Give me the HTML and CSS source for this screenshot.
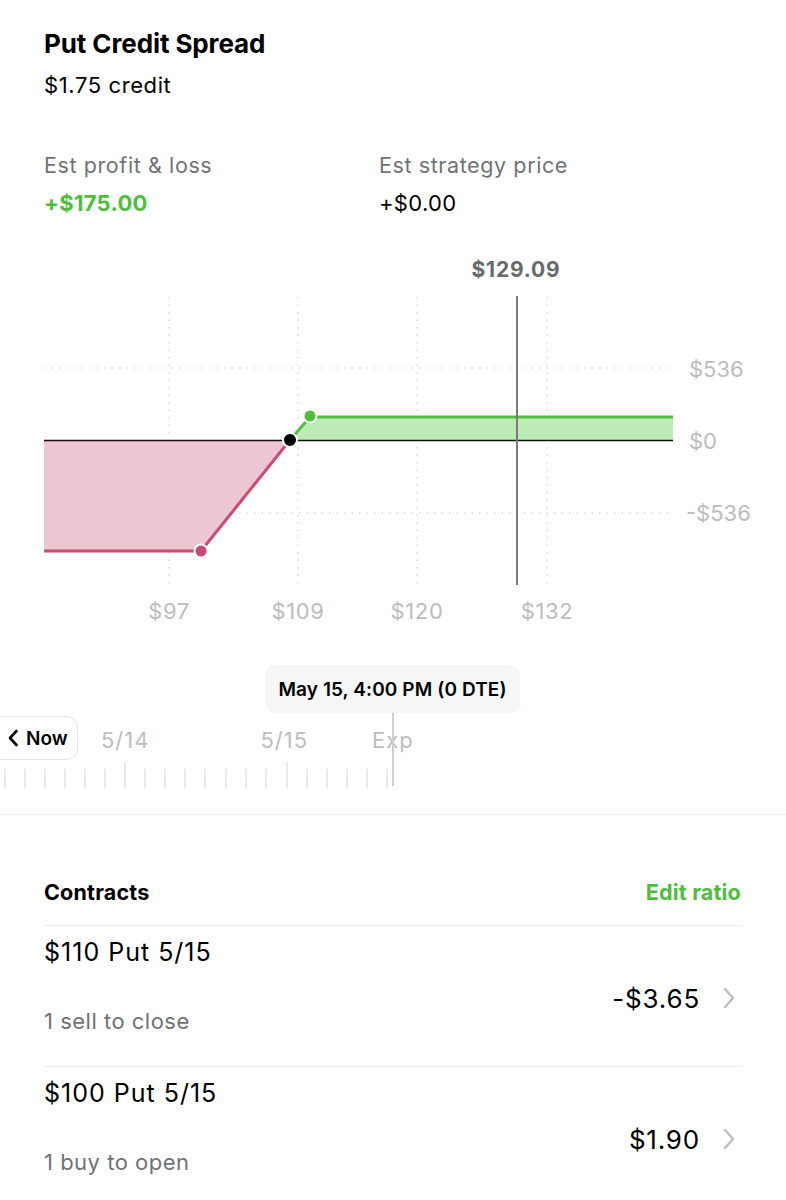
FILE: index.html
```html
<!DOCTYPE html>
<html lang="en">

<head>
    <meta charset="UTF-8">
    <meta name="viewport" content="width=device-width, initial-scale=1.0">
    <link rel="stylesheet" href="styles.css">
</head>

<body>
    <div class="page">
        <div class="header">
            <h1 class="title">Put Credit Spread</h1>
            <div class="subtitle">$1.75 credit</div>
        </div>

        <div class="stats">
            <div class="stat">
                <div class="stat-label">Est profit &amp; loss</div>
                <div class="stat-value stat-value-green">+$175.00</div>
            </div>
            <div class="stat">
                <div class="stat-label">Est strategy price</div>
                <div class="stat-value">+$0.00</div>
            </div>
        </div>

        <svg class="chart" viewBox="0 250 786 390" width="786" height="390">
            <!-- grid -->
            <g class="grid">
                <line x1="169" y1="297" x2="169" y2="584" />
                <line x1="298" y1="297" x2="298" y2="584" />
                <line x1="417" y1="297" x2="417" y2="584" />
                <line x1="547" y1="297" x2="547" y2="584" />
                <line x1="44" y1="368" x2="673" y2="368" />
                <line x1="44" y1="513" x2="673" y2="513" />
            </g>

            <!-- loss / profit areas -->
            <polygon points="44,440 290,440 201,551 44,551" fill="#ecc7d2" />
            <polygon points="290,440 310,417 673,417 673,440" fill="#bfebb7" />
            <line x1="44" y1="440.5" x2="673" y2="440.5" stroke="#111" stroke-width="1.6" />
            <polyline points="44,551 201,551 290,440" fill="none" stroke="#c94b70" stroke-width="3" />
            <polyline points="290,440 310,417 673,417" fill="none" stroke="#4fc03c" stroke-width="3" />

            <!-- current price -->
            <line x1="517" y1="296" x2="517" y2="585" stroke="#7a7a7a" stroke-width="2" />
            <text class="price-label" x="516" y="277" text-anchor="middle">$129.09</text>

            <!-- points -->
            <circle cx="201" cy="551" r="6.5" fill="#c94b70" stroke="#fff" stroke-width="2" />
            <circle cx="310" cy="416" r="6.5" fill="#4fc03c" stroke="#fff" stroke-width="2" />
            <circle cx="290" cy="440" r="7" fill="#000" stroke="#fff" stroke-width="2" />

            <!-- axis labels -->
            <g class="axis-y">
                <text x="689" y="377">$536</text>
                <text x="689" y="449">$0</text>
                <text x="686" y="521">-$536</text>
            </g>
            <g class="axis-x" text-anchor="middle">
                <text x="169" y="619">$97</text>
                <text x="298" y="619">$109</text>
                <text x="417" y="619">$120</text>
                <text x="547" y="619">$132</text>
            </g>
        </svg>

        <div class="timeline">
            <div class="tooltip">May 15, 4:00 PM (0 DTE)</div>
            <div class="scrubber">
                <button class="now-btn">
                    <svg width="12" height="18" viewBox="0 0 12 18">
                        <path d="M9.5 2 L3 9 L9.5 16" fill="none" stroke="#000" stroke-width="2.6" stroke-linecap="round" stroke-linejoin="round" />
                    </svg>
                    Now
                </button>
                <span class="tl-label tl-514">5/14</span>
                <span class="tl-label tl-515">5/15</span>
                <span class="tl-label tl-exp">Exp</span>
            </div>
            <svg class="ticks" width="400" height="26" viewBox="0 0 400 26">
                <g stroke="#e3e3e3" stroke-width="1.5">
                    <line x1="5" y1="7" x2="5" y2="26" />
                    <line x1="25" y1="7" x2="25" y2="26" />
                    <line x1="45" y1="7" x2="45" y2="26" />
                    <line x1="65" y1="7" x2="65" y2="26" />
                    <line x1="85" y1="7" x2="85" y2="26" />
                    <line x1="105" y1="7" x2="105" y2="26" />
                    <line x1="125" y1="0" x2="125" y2="26" />
                    <line x1="145" y1="7" x2="145" y2="26" />
                    <line x1="165" y1="7" x2="165" y2="26" />
                    <line x1="185" y1="7" x2="185" y2="26" />
                    <line x1="205" y1="7" x2="205" y2="26" />
                    <line x1="226" y1="7" x2="226" y2="26" />
                    <line x1="246" y1="7" x2="246" y2="26" />
                    <line x1="266" y1="7" x2="266" y2="26" />
                    <line x1="287" y1="0" x2="287" y2="26" />
                    <line x1="307" y1="7" x2="307" y2="26" />
                    <line x1="327" y1="7" x2="327" y2="26" />
                    <line x1="347" y1="7" x2="347" y2="26" />
                    <line x1="367" y1="7" x2="367" y2="26" />
                    <line x1="387" y1="7" x2="387" y2="26" />
                </g>
            </svg>
            <div class="exp-line"></div>
        </div>

        <div class="contracts">
            <div class="contracts-head">
                <span class="contracts-title">Contracts</span>
                <span class="edit-ratio">Edit ratio</span>
            </div>

            <div class="contract-row">
                <div class="contract-info">
                    <div class="contract-name">$110 Put 5/15</div>
                    <div class="contract-desc">1 sell to close</div>
                </div>
                <div class="contract-price">
                    -$3.65
                    <svg class="chevron" width="14" height="22" viewBox="0 0 14 22">
                        <path d="M3 2 L11 11 L3 20" fill="none" stroke="#bdbdbd" stroke-width="2.4" stroke-linecap="round" stroke-linejoin="round" />
                    </svg>
                </div>
            </div>

            <div class="contract-row">
                <div class="contract-info">
                    <div class="contract-name">$100 Put 5/15</div>
                    <div class="contract-desc">1 buy to open</div>
                </div>
                <div class="contract-price">
                    $1.90
                    <svg class="chevron" width="14" height="22" viewBox="0 0 14 22">
                        <path d="M3 2 L11 11 L3 20" fill="none" stroke="#bdbdbd" stroke-width="2.4" stroke-linecap="round" stroke-linejoin="round" />
                    </svg>
                </div>
            </div>
        </div>
    </div>
</body>

</html>
```

FILE: styles.css
```css
body {
    margin: 0;
    background: #fff;
    color: #000;
    font-family: 'Inter', 'Noto Sans', sans-serif;
}

.page {
    width: 786px;
    height: 1200px;
    overflow: hidden;
}

.header {
    padding: 29px 44px 0;
}

.title {
    margin: 0;
    font-size: 26px;
    line-height: 30px;
    font-weight: 700;
    letter-spacing: -0.1px;
}

.subtitle {
    margin-top: 12px;
    font-size: 22px;
    line-height: 28px;
    letter-spacing: 0.6px;
}

.stats {
    display: flex;
    padding: 52px 44px 0;
}

.stat {
    width: 335px;
}

.stat-label {
    font-size: 21.5px;
    line-height: 28px;
    color: #6f7377;
    letter-spacing: 0.6px;
}

.stat-value {
    margin-top: 10px;
    font-size: 22px;
    line-height: 28px;
    letter-spacing: 0.3px;
}

.stat-value-green {
    color: #4cbf3a;
    font-weight: 700;
}

.chart {
    display: block;
    margin-top: 33px;
}

.grid line {
    stroke: #d9d9d9;
    stroke-width: 1.5;
    stroke-dasharray: 1.5 6;
}

.price-label {
    font-size: 21px;
    font-weight: 700;
    fill: #666a6e;
    letter-spacing: 0.8px;
}

.axis-y text {
    font-size: 22px;
    fill: #bcbcbc;
}

.axis-x text {
    font-size: 22px;
    fill: #bcbcbc;
    letter-spacing: 0.6px;
}

/* timeline scrubber */
.timeline {
    position: relative;
    height: 175px;
    padding-top: 25px;
    box-sizing: border-box;
    border-bottom: 1px solid #ededed;
}

.tooltip {
    display: flex;
    align-items: center;
    justify-content: center;
    width: 255px;
    height: 48px;
    margin-left: 265px;
    background: #f5f6f8;
    border-radius: 10px;
    font-size: 19px;
    font-weight: 600;
    letter-spacing: 0.1px;
}

.scrubber {
    display: flex;
    align-items: center;
    height: 44px;
    margin-top: 3px;
}

.now-btn {
    display: flex;
    align-items: center;
    gap: 7px;
    width: 78px;
    height: 44px;
    padding: 0 0 0 7px;
    box-sizing: border-box;
    background: #fff;
    border: 1.5px solid #e6e6e6;
    border-left: none;
    border-radius: 0 12px 12px 0;
    font-family: 'Inter', sans-serif;
    font-size: 19px;
    font-weight: 600;
    color: #000;
}

.tl-label {
    font-size: 22px;
    color: #bdbdbd;
    letter-spacing: 1px;
    position: relative;
    top: 2px;
}

.tl-514 {
    margin-left: 23px;
}

.tl-515 {
    margin-left: 111px;
}

.tl-exp {
    margin-left: 64px;
}

.ticks {
    display: block;
    margin-top: 2px;
}

.exp-line {
    position: absolute;
    left: 392px;
    top: 73px;
    width: 1.5px;
    height: 73px;
    background: #cfcfcf;
}

/* contracts */
.contracts {
    padding: 0 44px;
}

.contracts-head {
    display: flex;
    justify-content: space-between;
    padding: 63px 0 19px;
    border-bottom: 1px solid #ededed;
    font-size: 21.5px;
    line-height: 28px;
    font-weight: 700;
    letter-spacing: 0.2px;
}

.edit-ratio {
    color: #4cbf3a;
    margin-right: 1px;
}

.contract-row {
    display: flex;
    justify-content: space-between;
    padding: 11px 0 30px;
    border-bottom: 1px solid #ededed;
}

.contract-name {
    font-size: 25px;
    line-height: 30px;
    letter-spacing: 1px;
}

.contract-desc {
    margin-top: 39px;
    font-size: 22px;
    line-height: 30px;
    color: #6f7377;
    letter-spacing: 0.5px;
}

.contract-price {
    display: flex;
    align-items: center;
    gap: 22px;
    margin-top: 46px;
    height: 30px;
    font-size: 26px;
    letter-spacing: 0.8px;
    margin-right: 6px;
}
```
